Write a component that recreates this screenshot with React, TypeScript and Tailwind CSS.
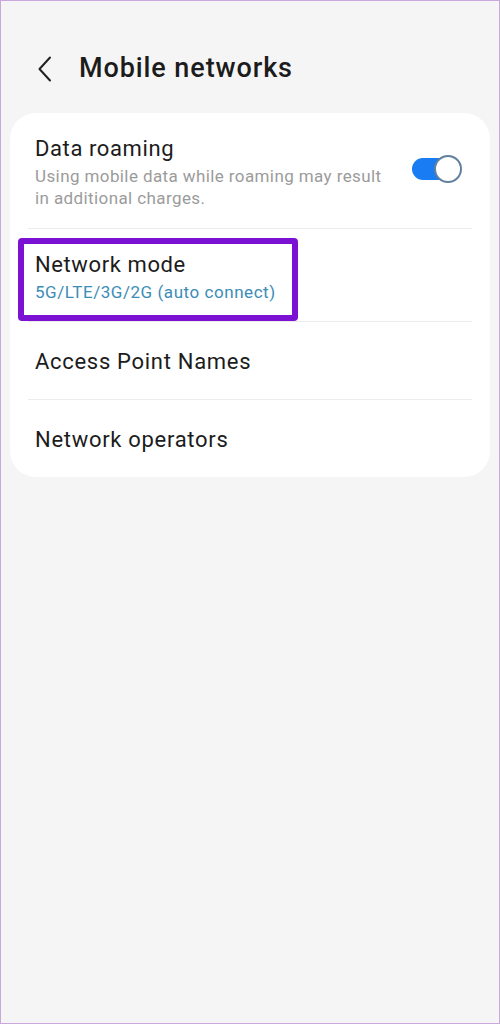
import React from "react";

function Divider() {
  return <div className="mx-[18px] h-px bg-[#ececec]" />;
}

export default function App() {
  return (
    <div
      className="w-[500px] h-[1024px] bg-[#f5f5f5] border border-[#c9a8de] overflow-hidden"
      style={{ fontFamily: "Roboto, 'Noto Sans', sans-serif" }}
    >
      <div className="h-[111px] flex items-center pl-[34px] pt-[24px]">
        <svg width="20" height="28" viewBox="0 0 20 28" className="mr-[24px]">
          <path d="M15 2.5 L4.5 14 L15 25.5" fill="none" stroke="#222" strokeWidth="2" strokeLinecap="round" strokeLinejoin="round" />
        </svg>
        <div className="text-[27px] font-medium text-[#1c1c1c] tracking-[0.9px]">Mobile networks</div>
      </div>

      <div className="mx-[9px] mt-[1px] bg-white rounded-[26px]">
        <div className="flex items-start pl-[25px] pr-[28px] pt-[22px] pb-[19px]">
          <div className="flex-1">
            <div className="text-[22px] leading-[28px] text-[#1c1c1c] tracking-[0.6px]">Data roaming</div>
            <div className="mt-[2px] max-w-[352px] text-[17px] leading-[22px] text-[#9b9b9b] tracking-[0.4px]">
              Using mobile data while roaming may result in additional charges.
            </div>
          </div>
          <div className="relative w-[50px] h-[28px] mt-[20px]">
            <div className="absolute left-0 top-[3px] w-[40px] h-[22px] rounded-full bg-[#1a7cf2]" />
            <div className="absolute right-0 top-0 w-[28px] h-[28px] rounded-full bg-white border-2 border-[#60809e]" />
          </div>
        </div>
        <Divider />
        <div className="relative pl-[25px] pt-[22px] pb-[18px]">
          <div className="text-[22px] leading-[28px] text-[#1c1c1c] tracking-[0.6px]">Network mode</div>
          <div className="mt-[2px] text-[17px] leading-[22px] text-[#3b8db6] tracking-[0.55px]">5G/LTE/3G/2G (auto connect)</div>
          <div className="absolute left-[8px] top-[9px] w-[280px] h-[83px] border-[6px] border-[#7b11d3] rounded-[4px]" />
        </div>
        <Divider />
        <div className="h-[77px] flex items-center pl-[25px] pt-[2px]">
          <div className="text-[22px] text-[#1c1c1c] tracking-[0.7px]">Access Point Names</div>
        </div>
        <Divider />
        <div className="h-[77px] flex items-center pl-[25px] pt-[2px]">
          <div className="text-[22px] text-[#1c1c1c] tracking-[0.7px]">Network operators</div>
        </div>
      </div>
    </div>
  );
}
